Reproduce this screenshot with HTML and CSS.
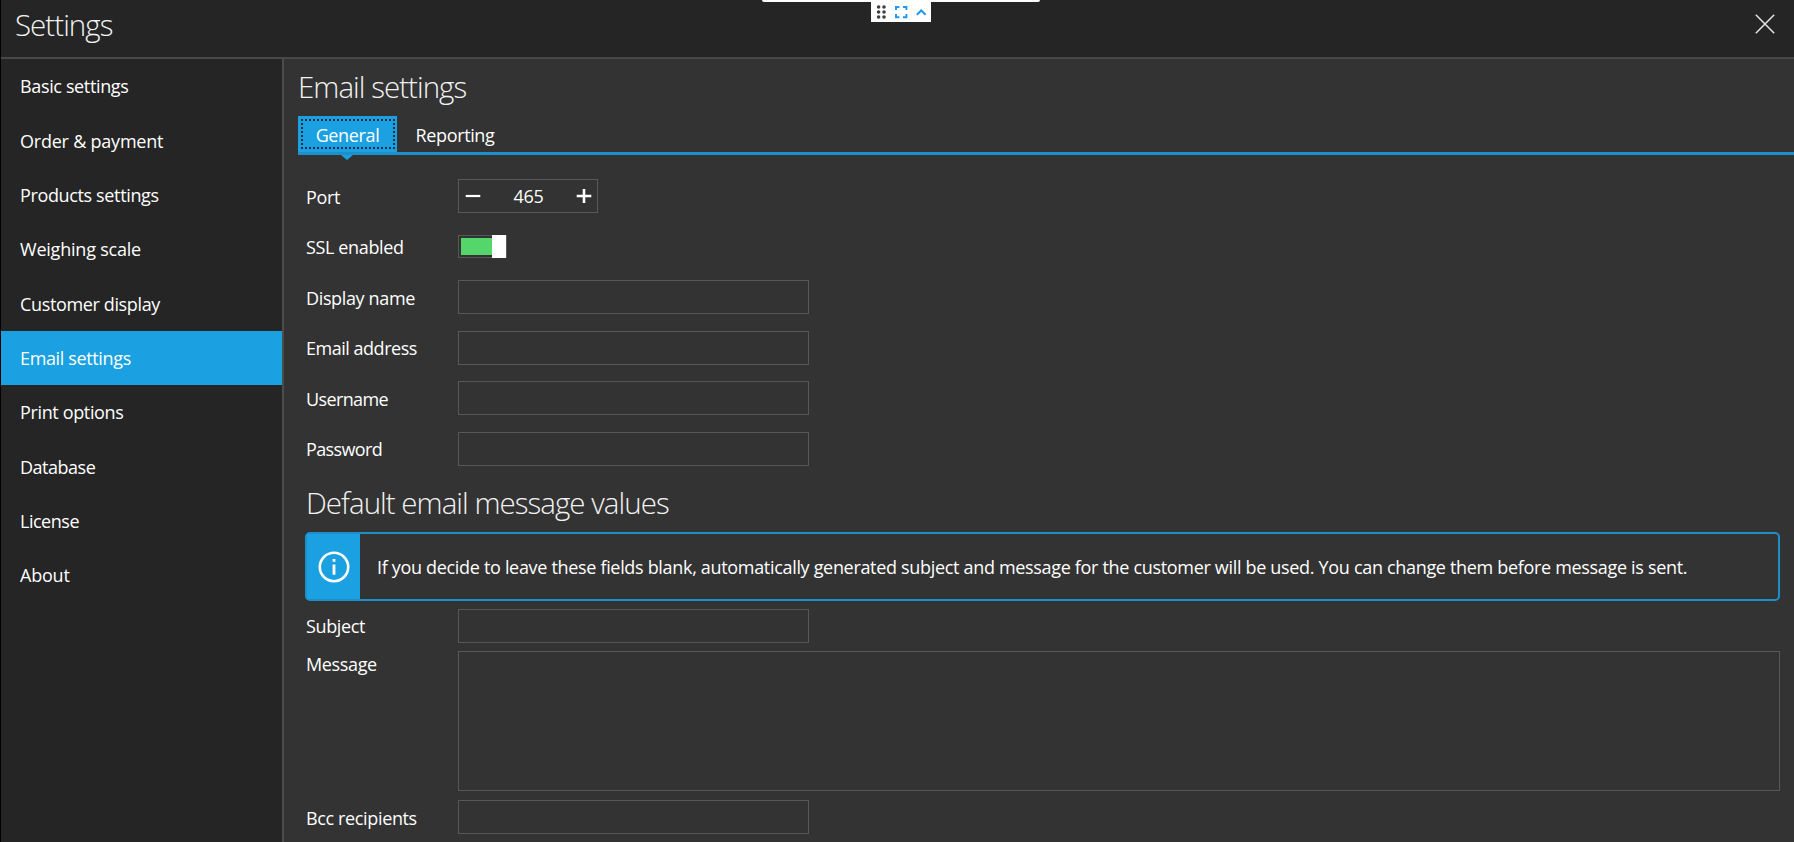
FILE: index.html
```html
<!DOCTYPE html>
<html lang="en">
<head>
<meta charset="utf-8">
<title>Settings</title>
<link rel="stylesheet" href="styles.css">
</head>
<body>
<div class="window">
  <header class="titlebar">
    <h1 class="heading title">Settings</h1>
    <svg class="close" viewBox="0 0 20 20" width="20" height="20"><path d="M.8.8 19.2 19.2M19.2.8.8 19.2" fill="none" stroke="#e4e4e4" stroke-width="1.5"/></svg>
  </header>
  <div class="body">
    <nav class="sidebar">
      <a class="item">Basic settings</a>
      <a class="item loose">Order &amp; payment</a>
      <a class="item">Products settings</a>
      <a class="item loose">Weighing scale</a>
      <a class="item">Customer display</a>
      <a class="item active">Email settings</a>
      <a class="item">Print options</a>
      <a class="item snug">Database</a>
      <a class="item snug">License</a>
      <a class="item loose">About</a>
    </nav>
    <main class="content">
      <h2 class="heading page-title">Email settings</h2>
      <div class="tabs">
        <div class="tab selected">General</div>
        <div class="tab">Reporting</div>
      </div>
      <div class="form">
        <div class="row"><label class="label">Port</label>
          <div class="stepper">
            <svg viewBox="0 0 16 16" width="16" height="16"><path d="M.7 8h14.6" stroke="#fff" stroke-width="2.2"/></svg>
            <span>465</span>
            <svg viewBox="0 0 16 16" width="16" height="16"><path d="M.7 8h14.6M8 .9v14.2" stroke="#fff" stroke-width="2.6"/></svg>
          </div>
        </div>
        <div class="row"><label class="label">SSL enabled</label><div class="toggle"><div class="fill"></div><div class="knob"></div></div></div>
        <div class="row"><label class="label">Display name</label><div class="input"></div></div>
        <div class="row"><label class="label snug">Email address</label><div class="input"></div></div>
        <div class="row"><label class="label snugger">Username</label><div class="input"></div></div>
        <div class="row"><label class="label snugger">Password</label><div class="input"></div></div>
        <h2 class="heading section-title">Default email message values</h2>
        <div class="info">
          <div class="info-icon"><svg viewBox="0 0 32 32" width="32" height="32"><circle cx="16" cy="16" r="14.2" fill="none" stroke="#fff" stroke-width="2.6"/><path d="M16 13.4v10.4M16 8v2.8" stroke="#fff" stroke-width="2.8"/></svg></div>
          <span class="info-text">If you decide to leave these fields blank, automatically generated subject and message for the customer will be used. You can change them before message is sent.</span>
        </div>
        <div class="row tight"><label class="label">Subject</label><div class="input"></div></div>
        <div class="row message"><label class="label">Message</label><div class="input area"></div></div>
        <div class="row tight"><label class="label">Bcc recipients</label><div class="input"></div></div>
      </div>
    </main>
  </div>
  <div class="session-bar"></div>
  <div class="session-tools">
    <svg viewBox="0 0 60 20" width="60" height="20">
      <g fill="#3f3f3f"><circle cx="7.6" cy="5" r="1.8"/><circle cx="13" cy="5" r="1.8"/><circle cx="7.6" cy="10" r="1.8"/><circle cx="13" cy="10" r="1.8"/><circle cx="7.6" cy="15" r="1.8"/><circle cx="13" cy="15" r="1.8"/></g>
      <path d="M25 8V5h3.4M32 5h3.4v3M35.400 12v3.300H32M28.400 15.300H25V12" fill="none" stroke="#2196f3" stroke-width="1.900"/>
      <path d="m45.800 12.700 4.400-4.200 4.400 4.200" fill="none" stroke="#2196f3" stroke-width="2"/>
    </svg>
  </div>
</div>
</body>
</html>
```
FILE: styles.css
```css
* { box-sizing: border-box; }
body { margin: 0; background: #000; font-family: "Open Sans", "Noto Sans", sans-serif; font-size: 18px; line-height: 26px; color: #fff; letter-spacing: -0.36px; white-space: nowrap; }
.window { position: relative; height: 842px; margin-left: 1px; background: #333; overflow: hidden; display: flex; flex-direction: column; }
.heading { margin: 0; font-weight: 300; font-size: 29.5px; line-height: 40px; color: #f2f2f2; letter-spacing: -0.97px; }
.titlebar { height: 59px; flex: none; background: #252525; border-bottom: 2px solid #484848; display: flex; justify-content: space-between; align-items: flex-start; padding: 5px 19px 0 14px; }
.close { margin-top: 9px; }
.body { flex: 1; display: flex; min-height: 0; }
.sidebar { width: 283px; flex: none; background: #252525; border-right: 2px solid #4c4c4a; }
.item { height: 54.35px; display: flex; align-items: center; padding-left: 19px; }
.loose { letter-spacing: -0.22px; }
.snug { letter-spacing: -0.48px; }
.snugger { letter-spacing: -0.62px; }
.active { background: #1ba1e2; }
.content { flex: 1; min-width: 0; padding: 8px 0 0 14px; }
.tabs { height: 39px; margin-top: 9px; display: flex; border-bottom: 3px solid #1e90c9; }
.tab { width: 116px; display: flex; justify-content: center; align-items: center; padding-top: 1px; }
.selected { position: relative; width: 99px; background: #1ba1e2; }
.selected::before { content: ""; position: absolute; inset: 3px 2px 3px 3px; border: 2px dotted #17303d; }
.selected::after { content: ""; position: absolute; left: 43px; top: 39px; border: 6px solid transparent; border-top: 5px solid #1ba1e2; border-bottom: 0; }
.form { padding: 24px 14px 0 8px; }
.row { display: flex; height: 34px; margin-bottom: 16.6px; align-items: center; }
.label { width: 152px; flex: none; padding-top: 1px; }
.input { width: 351px; height: 34px; border: 1px solid #575755; }
.stepper { width: 140px; height: 34px; border: 1px solid #575755; display: flex; align-items: center; justify-content: space-between; padding: 0 5px 0 6px; }
.toggle { width: 49px; height: 23px; margin-top: -1px; border: 1px solid #575755; display: flex; align-items: center; padding-left: 2px; }
.fill { width: 32px; height: 17px; background: #55d66b; }
.knob { width: 14px; height: 23px; flex: none; background: #fff; }
.section-title { margin-top: 1px; }
.info { height: 69px; margin: 9px 0 8px -1px; border: 2px solid #1c8fc8; border-radius: 5px; display: flex; align-items: center; }
.info-icon { width: 53px; height: 65px; margin-right: 17px; padding-top: 1px; flex: none; background: #1ba1e2; display: flex; align-items: center; justify-content: center; }
.info-text { letter-spacing: -0.32px; padding-top: 1px; }
.tight { margin-bottom: 8.5px; }
.message { height: 140px; align-items: flex-start; margin-bottom: 9px; }
.message .label { padding-top: 0; }
.area { flex: 1; height: 140px; }
.session-bar { position: absolute; left: 761px; top: 0; width: 278px; height: 2px; background: #fff; border-radius: 0 0 3px 3px; }
.session-tools { position: absolute; left: 870px; top: 2px; width: 60px; height: 20px; background: #fff; }
.session-tools svg { display: block; }
```
